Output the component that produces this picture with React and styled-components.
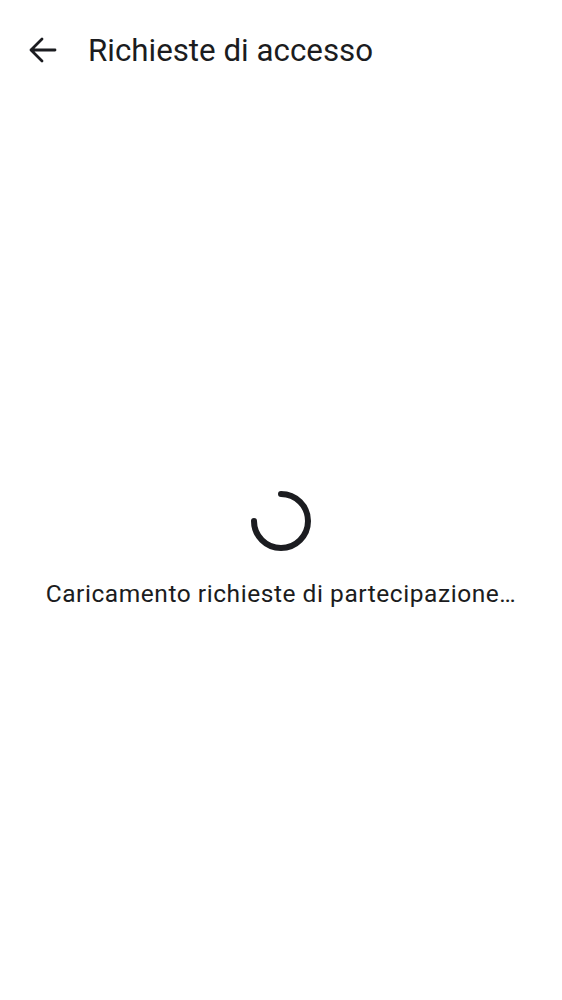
import React from "react";
import styled, { createGlobalStyle } from "styled-components";

const GlobalStyle = createGlobalStyle`
  html, body {
    margin: 0;
    padding: 0;
    background: #ffffff;
  }
  body {
    font-family: Roboto, "Noto Sans", sans-serif;
    color: #1b1c20;
  }
`;

const Screen = styled.div`
  width: 562px;
  height: 1000px;
  display: flex;
  flex-direction: column;
  background: #ffffff;
`;

const TopBar = styled.header`
  height: 100px;
  display: flex;
  align-items: center;
  padding: 0 0 0 24px;
  box-sizing: border-box;
`;

const BackButton = styled.button`
  width: 38px;
  height: 38px;
  padding: 0;
  border: none;
  background: transparent;
  display: flex;
  align-items: center;
  justify-content: center;
  color: #1b1c20;
  margin-right: 26px;
`;

const Title = styled.h1`
  margin: 0;
  font-size: 31.3px;
  font-weight: 400;
  letter-spacing: 0;
  color: #1b1c20;
`;

const Body = styled.main`
  flex: 1;
  display: flex;
  flex-direction: column;
  align-items: center;
  justify-content: center;
  gap: 24px;
  padding-bottom: 6px;
`;

const Spinner = styled.svg`
  width: 68px;
  height: 68px;
`;

const Message = styled.p`
  margin: 0;
  font-size: 24.5px;
  letter-spacing: 0.55px;
  color: #1b1c20;
`;

export default function App() {
  return (
    <>
      <GlobalStyle />
      <Screen>
        <TopBar>
          <BackButton aria-label="Indietro">
            <svg width="38" height="38" viewBox="0 0 38 38" fill="none">
              <path
                d="M31 19H7M18 8L7 19L18 30"
                stroke="currentColor"
                strokeWidth="2.8"
                strokeLinecap="round"
                strokeLinejoin="round"
              />
            </svg>
          </BackButton>
          <Title>Richieste di accesso</Title>
        </TopBar>
        <Body>
          <Spinner viewBox="0 0 68 68">
            <path
              d="M34 7 A27 27 0 1 1 7 34"
              fill="none"
              stroke="#1b1c20"
              strokeWidth="6"
              strokeLinecap="round"
            />
          </Spinner>
          <Message>Caricamento richieste di partecipazione…</Message>
        </Body>
      </Screen>
    </>
  );
}
